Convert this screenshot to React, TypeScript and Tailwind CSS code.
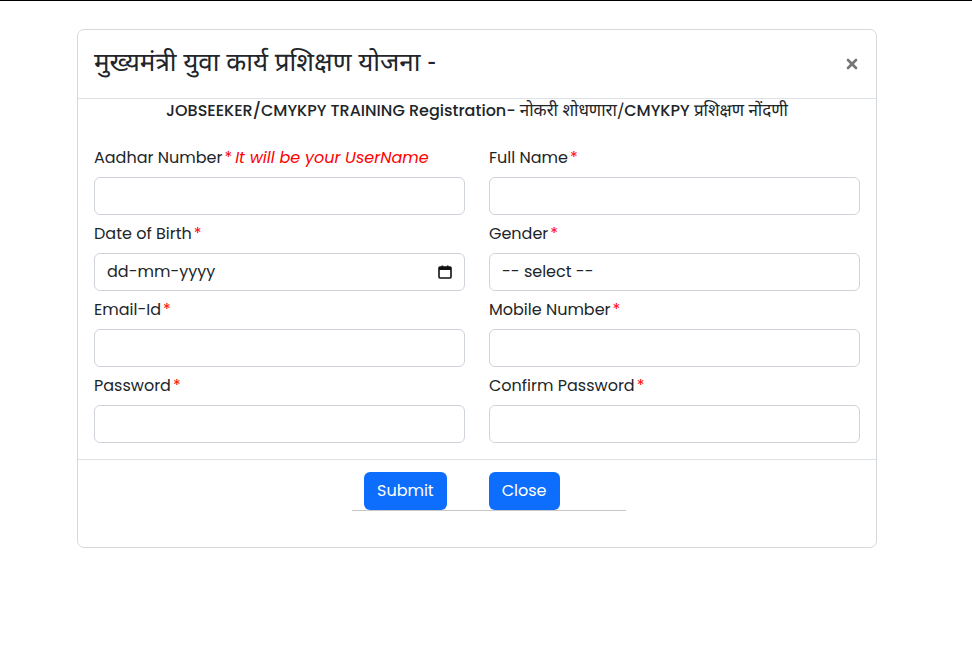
import { X } from "lucide-react";

const font = {
  fontFamily: '"Poppins", "Inter", "Noto Sans", sans-serif',
};

const deva = {
  fontFamily: '"Noto Sans Devanagari", "Lohit Devanagari", "Noto Serif Devanagari", "Gargi", sans-serif',
};

const fields = [
  { label: "Aadhar Number", note: "It will be your UserName", kind: "text" },
  { label: "Full Name", kind: "text" },
  { label: "Date of Birth", kind: "date" },
  { label: "Gender", kind: "select" },
  { label: "Email-Id", kind: "text" },
  { label: "Mobile Number", kind: "text" },
  { label: "Password", kind: "text" },
  { label: "Confirm Password", kind: "text" },
];

const CalendarIcon = () => (
  <svg width="14" height="14" viewBox="0 0 14 14" fill="none">
    <rect x="1" y="2" width="12" height="11" rx="1" stroke="#111" strokeWidth="1.6" />
    <rect x="1" y="2" width="12" height="3" fill="#111" />
    <rect x="3.5" y="0.5" width="1.6" height="2.5" fill="#111" />
    <rect x="8.9" y="0.5" width="1.6" height="2.5" fill="#111" />
  </svg>
);

const Field = ({ f }: { f: (typeof fields)[number] }) => (
  <div className="flex flex-col">
    <label className="text-[16px] leading-[24px] text-[#212529] mb-[7px]">
      {f.label}
      <span className="text-[#ff0000] ml-[2px]">*</span>
      {f.note && <i className="text-[#ff0000] ml-[3px]">{f.note}</i>}
    </label>
    <div className="h-[38px] border border-[#ced4da] rounded-[6px] bg-white flex items-center px-[12px] text-[16px] text-[#212529]">
      {f.kind === "date" && (
        <>
          <span className="flex-1">dd-mm-yyyy</span>
          <CalendarIcon />
        </>
      )}
      {f.kind === "select" && <span>-- select --</span>}
    </div>
  </div>
);

export default function App() {
  return (
    <div className="min-h-[646px] bg-white border-t border-black" style={font}>
      <div className="ml-[77px] mt-[28px] w-[800px] h-[519px] border border-[#d6d9dc] rounded-[7px] flex flex-col">
        {/* header */}
        <div className="h-[69px] border-b border-[#dee2e6] flex items-center justify-between pl-[16px] pr-[16px]">
          <h4 className="text-[26px] text-[#212529] leading-none mt-[2px]" style={deva}>
            मुख्यमंत्री युवा कार्य प्रशिक्षण योजना -
          </h4>
          <X size={16} strokeWidth={4} className="text-[#777]" />
        </div>

        <p className="text-center text-[16px] font-medium text-[#212529] mt-[1px] leading-[22px]">
          JOBSEEKER/CMYKPY TRAINING Registration-{" "}
          <span className="font-normal text-[17px]" style={deva}>नोकरी शोधणारा/</span>CMYKPY{" "}
          <span className="font-normal text-[17px]" style={deva}>प्रशिक्षण नोंदणी</span>
        </p>

        {/* body */}
        <div className="grid grid-cols-2 gap-x-[24px] gap-y-[7px] px-[16px] pt-[23px] pb-[16px] border-b border-[#dee2e6]">
          {fields.map((f) => (
            <Field key={f.label} f={f} />
          ))}
        </div>

        {/* footer */}
        <div className="pl-[274px] pt-[12px]">
          <div className="flex gap-[42px] pl-[12px]">
            <button className="h-[38px] px-[13px] rounded-[6px] bg-[#0d6efd] text-white text-[16px]">Submit</button>
            <button className="h-[38px] px-[13px] rounded-[6px] bg-[#0d6efd] text-white text-[16px]">Close</button>
          </div>
          <div className="w-[274px] border-t border-[#c8c8c8]" />
        </div>
      </div>
    </div>
  );
}
